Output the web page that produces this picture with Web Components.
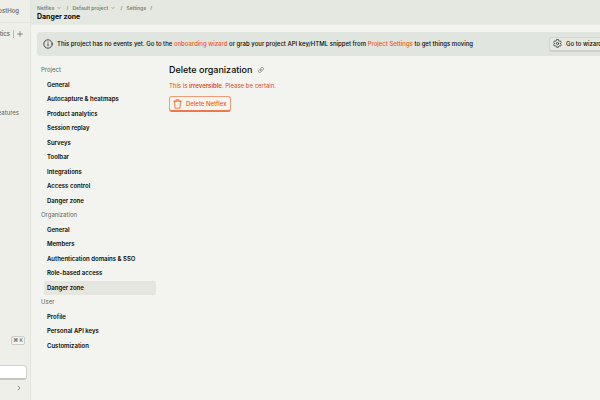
<!DOCTYPE html>
<html lang="en">
<head>
<meta charset="utf-8">
<title>Danger zone</title>
<style>
:root{--bg:#f3f4ef;--side:#eeefe8;--head:#e5e8e1;--note:#e1e5df;--line:#e3e5de;--text:#080a06;--muted:#62645e;--accent:#f0561a;--danger:#e2481c}
html,body{margin:0;height:100%}
body{overflow:hidden;background:var(--bg);color:var(--text);font:500 6px/8px Inter,"Liberation Sans",sans-serif}
</style>
</head>
<body>
<app-shell>
  <side-bar slot="side"></side-bar>
  <page-header slot="head" heading="Danger zone"></page-header>
  <notice-bar>This project has no events yet. Go to the <a href="#wizard">onboarding wizard</a> or grab your project API key/HTML snippet from <a href="#settings">Project Settings</a> to get things moving</notice-bar>
  <settings-layout>
    <settings-nav slot="nav"></settings-nav>
    <delete-section></delete-section>
  </settings-layout>
</app-shell>
<script>
const define = (name, html, setup) => customElements.define(name, class extends HTMLElement {
  connectedCallback() {
    if (this.shadowRoot) return;
    const t = document.createElement('template');
    t.innerHTML = `<style>*{box-sizing:border-box}button{font:inherit;color:inherit;cursor:pointer}svg{display:block;flex:none;fill:none;stroke:currentColor;stroke-linecap:round;stroke-linejoin:round}</style>` + html;
    this.attachShadow({mode: 'open'}).append(t.content.cloneNode(true));
    if (setup) setup(this, this.shadowRoot);
  }
});

define('app-shell', `<style>
:host{display:grid;grid-template-columns:31px minmax(0,1fr);height:100vh}
main{overflow:hidden;min-width:0}
.body{padding:7px 0 0 6px}
</style><slot name="side"></slot><main><slot name="head"></slot><div class="body"><slot></slot></div></main>`);

define('side-bar', `<style>
:host{display:flex;flex-direction:column;align-items:flex-end;overflow:hidden;background:var(--side);border-right:1px solid var(--line);color:var(--muted);font-weight:500}
div{white-space:nowrap}
.brand{display:flex;justify-content:flex-end;align-items:center;width:100%;height:23px;padding-right:11px;border-bottom:1px solid var(--line)}
.tools{display:flex;align-items:center;gap:3px;height:21px;padding-right:7px}
.tools i{width:1px;height:8px;background:#b9bbb3}
button{background:none;border:0;padding:0}
.mid{flex:1;padding:65px 11px 0 0;font-weight:400}
kbd{font:500 5px/7px Inter,"DejaVu Sans",sans-serif;border:1px solid #cccec6;border-radius:2px;padding:0 1px;margin:0 5px 20px 0;background:var(--bg)}
input{width:60px;height:15px;margin:0 3px 4px 0;background:#fff;border:1px solid #d0d2cb;border-bottom:2px solid #c5c7c0;border-radius:3px;padding:0}
.more{margin:0 8px 8px 0}
</style>
<div class="brand">PostHog</div>
<div class="tools"><span>Analytics</span><i></i><button aria-label="Add"><svg width="6" height="6" viewBox="0 0 6 6" stroke-width=".7"><path d="M3 .5v5M.5 3h5"/></svg></button></div>
<div class="mid">Early access features</div>
<kbd>⌘ K</kbd>
<input aria-label="Search">
<button class="more" aria-label="More"><svg width="6" height="8" viewBox="0 0 6 8" stroke-width=".7"><path d="m2 2 2 2-2 2"/></svg></button>`);

define('page-header', `<style>
:host{display:block;background:var(--head);border-bottom:1px solid #e9ebe5;padding:4px 6px 2px}
nav{display:flex;align-items:center;gap:4px;color:#7b7e77;font-weight:600;font-size:5px}
a{color:inherit;text-decoration:none;display:flex;align-items:center;gap:3px}
h1{margin:0;font-size:7px;line-height:10px;font-weight:700}
</style><nav aria-label="Breadcrumb"><a href="#o">Netflex <svg width="4" height="4" viewBox="0 0 4 4" stroke-width=".6"><path d="m.8 1.4 1.2 1.2 1.2-1.2"/></svg></a><span>&nbsp;/</span><a href="#p">Default project <svg width="4" height="4" viewBox="0 0 4 4" stroke-width=".6"><path d="m.8 1.4 1.2 1.2 1.2-1.2"/></svg></a><span>&nbsp;/</span><a href="#s">Settings</a><span>/</span></nav><h1></h1>`,
(el, r) => r.querySelector('h1').textContent = el.getAttribute('heading'));

define('notice-bar', `<style>
:host{display:flex;align-items:center;gap:4px;height:24px;margin-right:-16px;padding:0 9px 0 6px;background:var(--note);border-radius:3px;white-space:nowrap}
p{margin:0;flex:1}
::slotted(a){color:var(--accent);text-decoration:none}
button{display:flex;align-items:center;gap:4px;height:15px;width:58px;padding:0 3px;background:#e7eae4;border:1px solid #d3d6cf;border-bottom:2px solid #cdd0c9;border-radius:3px}
</style><svg width="10" height="10" viewBox="0 0 10 10" stroke-width=".7"><circle cx="5" cy="5" r="4.2"/><path d="M5 4.6v2.2M5 3v.1"/></svg><p><slot></slot></p>
<button><svg width="9" height="9" viewBox="0 0 24 24" stroke-width="1.7"><path d="m9.500 2-.6 2.600-2 1.100-2.600-.7-2.500 4.200L3.700 11v2l-1.900 1.800 2.500 4.200 2.600-.7 2 1.100.6 2.600h5l.6-2.600 2-1.100 2.600.7 2.500-4.200-1.900-1.800v-2l1.900-1.800L19.700 5l-2.600.7-2-1.100-.6-2.600z"/><circle cx="12" cy="12" r="3"/></svg><span>Go to wizard</span></button>`);

define('settings-layout', `<style>
:host{display:grid;grid-template-columns:119px minmax(0,1fr);gap:13px;padding-top:7px;align-items:start}
</style><slot name="nav"></slot><slot></slot>`);

define('settings-nav', `<style>
:host{display:flex;flex-direction:column;height:290px;padding-left:4px}
section{display:grid;grid-auto-rows:1fr;min-height:0}
h2,ul{margin:0;padding:0}
h2{font-size:6px;font-weight:400;color:var(--muted)}
h2,a{display:flex;align-items:center}
section,ul{grid-template-columns:minmax(0,1fr)}
ul{display:grid;grid-auto-rows:1fr;list-style:none;padding-left:3px}
li{display:grid}
a{color:inherit;font-weight:600;text-decoration:none;padding-left:3px;border-radius:2px;white-space:nowrap}
a[aria-current]{background:#e4e6df}
</style>`, (el, r) => {
  const groups = [
    ['Project', ['General','Autocapture & heatmaps','Product analytics','Session replay','Surveys','Toolbar','Integrations','Access control','Danger zone']],
    ['Organization', ['General','Members','Authentication domains & SSO','Role-based access','Danger zone']],
    ['User', ['Profile','Personal API keys','Customization']]
  ];
  for (const [name, items] of groups) {
    const s = document.createElement('section');
    s.style.flex = `${items.length + 1} 0 0`;
    s.style.gridTemplateRows = `1fr ${items.length}fr`;
    const h = document.createElement('h2');
    h.textContent = name;
    const ul = document.createElement('ul');
    for (const label of items) {
      const a = document.createElement('a');
      a.href = '#';
      a.textContent = label;
      if (name === 'Organization' && label === 'Danger zone') a.setAttribute('aria-current', 'page');
      const li = document.createElement('li');
      li.append(a);
      ul.append(li);
    }
    s.append(h, ul);
    r.append(s);
  }
});

define('delete-section', `<style>
:host{display:flex;flex-direction:column;align-items:flex-start}
header{display:flex;align-items:center;gap:6px}
h2{margin:0;font-size:9px;line-height:14px;font-weight:500}
p{margin:5px 0 6px;color:var(--danger);font-weight:400}
b{font-weight:600}
.icon{border:0;background:none;padding:0;color:var(--muted)}
.danger{display:flex;align-items:center;gap:4px;height:16px;padding:0 4px 0 3px;color:var(--accent);background:#f8f5ef;border:1px solid #f29a78;border-bottom:2px solid #ec7850;border-radius:3px}
</style><header><h2>Delete organization</h2><button class="icon" aria-label="Copy link"><svg width="6" height="6" viewBox="0 0 24 24" stroke-width="2.600"><path d="M10 14a5 5 0 0 0 7 0l4-4a5 5 0 0 0-7-7l-3 3M14 10a5 5 0 0 0-7 0l-4 4a5 5 0 0 0 7 7l3-3"/></svg></button></header>
<p>This is <b>irreversible</b>. Please be certain.</p>
<button class="danger"><svg width="9" height="10" viewBox="0 0 9 10" stroke-width=".8"><path d="M.7 2.200h7.600M3 2.200V.8h3v1.400M1.500 2.200l.5 7h5l.5-7"/></svg>Delete Netflex</button>`);
</script>
</body>
</html>
